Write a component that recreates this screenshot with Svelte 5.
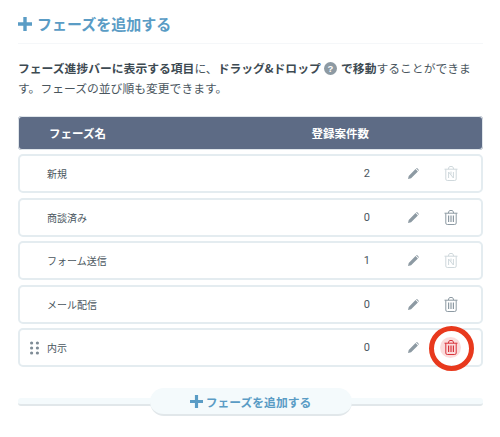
<script>
  const rows = [
    { name: '新規', count: 2, locked: true },
    { name: '商談済み', count: 0, locked: false },
    { name: 'フォーム送信', count: 1, locked: true },
    { name: 'メール配信', count: 0, locked: false },
    { name: '内示', count: 0, locked: false, hover: true }
  ];
</script>

{#snippet plus(size)}
  <svg class="plus" width={size} height={size} viewBox="0 0 14 14"><path d="M5.3 0h3.4v5.3H14v3.4H8.7V14H5.3V8.7H0V5.3h5.3z" fill="currentColor"/></svg>
{/snippet}

<div class="page">
  <h2 class="title">{@render plus(14)}<span>フェーズを追加する</span></h2>
  <p class="desc"><b>フェーズ進捗バーに表示する項目</b>に、<b>ドラッグ&amp;ドロップ</b>
    <svg class="help" width="13" height="13" viewBox="0 0 13 13"><circle cx="6.5" cy="6.5" r="6.5" fill="#8d9aa3"/><text x="6.5" y="10" text-anchor="middle" font-size="9.5" font-weight="700" fill="#fff" font-family="Liberation Sans">?</text></svg>
    <b>で移動</b>することができます。フェーズの並び順も変更できます。</p>

  <div class="head"><span class="h-name">フェーズ名</span><span class="h-count">登録案件数</span></div>

  <div class="rows">
    {#each rows as r}
      <div class="row">
        <span class="grip">
          {#if r.hover}
            <svg width="9" height="14" viewBox="0 0 9 14" fill="#7f8c96"><circle cx="1.6" cy="2" r="1.6"/><circle cx="7.4" cy="2" r="1.6"/><circle cx="1.6" cy="7" r="1.6"/><circle cx="7.4" cy="7" r="1.6"/><circle cx="1.6" cy="12" r="1.6"/><circle cx="7.4" cy="12" r="1.6"/></svg>
          {/if}
        </span>
        <span class="name">{r.name}</span>
        <span class="count">{r.count}</span>
        <svg class="pencil" width="11" height="11" viewBox="0 0 12 12" fill="#8d9aa3"><path d="M0 12l.8-3.4L8.2 1.2l2.6 2.6-7.4 7.4zM8.9.5l.4-.4a.5.5 0 0 1 .6 0l2 2a.5.5 0 0 1 0 .6l-.4.4z"/></svg>
        <span class="trash-wrap" class:hover={r.hover}>
          <svg class="trash" class:locked={r.locked} width="14" height="15" viewBox="0 0 14 15" fill="none" stroke="currentColor" stroke-width="1">
            <path d="M.5 3.2h13M4.3 3.2l.8-2.2q.2-.5.7-.5h2.4q.5 0 .7.5l.8 2.2M1.8 3.2v9.8q0 1.5 1.5 1.5h7.4q1.5 0 1.5-1.5V3.2"/>
            {#if r.locked}
              <path d="M4.6 6v6M4.6 6l4.8 6M9.4 6v6M7 5.5v3"/>
            {:else}
              <path d="M4.6 5.5v6.5M7 5.5v6.5M9.4 5.5v6.5" stroke-width="1.2"/>
            {/if}
          </svg>
        </span>
      </div>
    {/each}
    <span class="ring"></span>
  </div>

  <div class="add">
    <button class="add-btn">{@render plus(13)}<span>フェーズを追加する</span></button>
  </div>
</div>

<style>
  :global(body) { margin: 0; background: #fff; }
  .page {
    width: 500px; height: 437px; box-sizing: border-box; padding: 0 17px 0 18px;
    font-family: "Noto Sans CJK JP", "Noto Sans", sans-serif; color: #3d4a52; overflow: hidden;
  }
  .title {
    margin: 0; height: 44px; box-sizing: border-box; padding-top: 13px; display: flex; align-items: flex-start; gap: 5px;
    font-size: 15px; line-height: 22px; font-weight: 700; color: #5a9cc5; border-bottom: 1px solid #f5f7f9;
  }
  .title .plus { margin-top: 4px; }
  .desc { margin: 14px 0 0; font-size: 11.8px; line-height: 20px; width: 465px; height: 38px; color: #4a565e; }
  .desc b { font-weight: 700; color: #3d4a52; }
  .help { vertical-align: -2px; margin: 0 1px; }
  .head {
    margin-top: 20px; height: 34px; background: #5d6b85; border-radius: 4px; display: flex; align-items: center;
    color: #fff; font-size: 11.5px; font-weight: 700; box-shadow: 0 0 0 1px #dfe5ea inset;
  }
  .h-name { margin-left: 31px; }
  .h-count { margin-left: auto; margin-right: 114px; }
  .rows { position: relative; display: flex; flex-direction: column; gap: 4.5px; margin-top: 4px; }
  .row {
    height: 39px; box-sizing: border-box; border: 2px solid #e4ecf0; border-radius: 5px; background: #fff;
    display: flex; align-items: center; font-size: 10px; color: #4a565e; padding-left: 10px;
  }
  .grip { width: 9px; height: 14px; margin-right: 8px; display: flex; }
  .name { width: 298px; }
  .count { width: 25px; text-align: right; font-family: "Roboto", sans-serif; font-size: 11px; }
  .pencil { margin-left: 38px; }
  .trash-wrap {
    margin-left: 21px; width: 21px; height: 21px; display: flex; align-items: center; justify-content: center;
    border-radius: 50%; color: #8d9aa3;
  }
  .trash-wrap.hover { background: #fbdcdc; color: #d8343c; }
  .trash.locked { color: #cfd8dc; }
  .ring {
    position: absolute; left: 411px; top: 172px; width: 45px; height: 45px; box-sizing: border-box;
    border: 5px solid #e8391d; border-radius: 50%;
  }
  .add {
    margin-top: 31px; height: 8px; position: relative; background: #f4fafc; border-bottom: 2px solid #e1e7ea;
    border-radius: 3px; box-sizing: border-box; display: flex; justify-content: center;
  }
  .add-btn {
    position: absolute; top: -10px; height: 28px; width: 202px; border: 0; border-bottom: 2px solid #e1e7ea; border-radius: 14px;
    background: #f4fafc; color: #5a9cc5; font: 700 11.8px "Noto Sans CJK JP", sans-serif;
    display: flex; align-items: center; justify-content: center; gap: 3px; padding: 0;
  }
</style>
